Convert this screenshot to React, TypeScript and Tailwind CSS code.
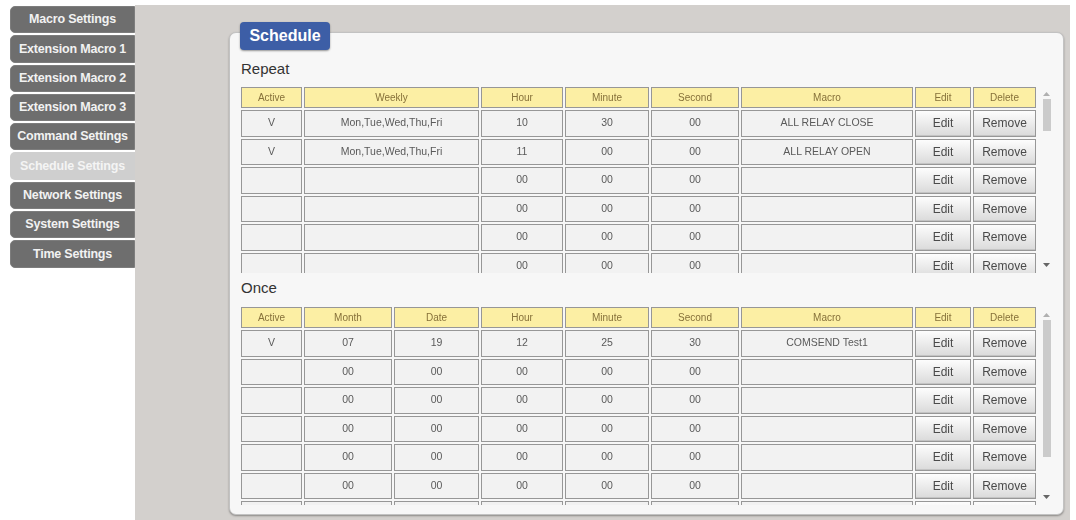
import React from 'react'

const menu = [
  'Macro Settings',
  'Extension Macro 1',
  'Extension Macro 2',
  'Extension Macro 3',
  'Command Settings',
  'Schedule Settings',
  'Network Settings',
  'System Settings',
  'Time Settings',
]

const repeatHead = ['Active', 'Weekly', 'Hour', 'Minute', 'Second', 'Macro']
const repeatRows = [
  ['V', 'Mon,Tue,Wed,Thu,Fri', '10', '30', '00', 'ALL RELAY CLOSE'],
  ['V', 'Mon,Tue,Wed,Thu,Fri', '11', '00', '00', 'ALL RELAY OPEN'],
  ['', '', '00', '00', '00', ''],
  ['', '', '00', '00', '00', ''],
  ['', '', '00', '00', '00', ''],
  ['', '', '00', '00', '00', ''],
]

const onceHead = ['Active', 'Month', 'Date', 'Hour', 'Minute', 'Second', 'Macro']
const onceRows = [
  ['V', '07', '19', '12', '25', '30', 'COMSEND Test1'],
  ['', '00', '00', '00', '00', '00', ''],
  ['', '00', '00', '00', '00', '00', ''],
  ['', '00', '00', '00', '00', '00', ''],
  ['', '00', '00', '00', '00', '00', ''],
  ['', '00', '00', '00', '00', '00', ''],
  // last row only peeks in at the bottom of the scroll box
  ['', '', '', '', '', '', ''],
]

function HeadCell({ label }: { label: string }) {
  return (
    <div className="border border-[#979797] bg-[#fcefa4] flex items-center justify-center text-[10px] text-[#86713a]">
      {label}
    </div>
  )
}

function Cell({ value }: { value: string }) {
  return (
    <div className="border border-[#979797] bg-[#f2f2f2] flex items-center justify-center text-[10.5px] text-[#5a5a5a]">
      {value}
    </div>
  )
}

function RowButton({ label }: { label: string }) {
  return (
    <button className="border border-[#979797] bg-gradient-to-b from-[#fdfdfd] to-[#dadada] flex items-center justify-center text-[12px] text-[#4a4a4a] shadow-[inset_0_-1px_0_#c4c4c4]">
      {label}
    </button>
  )
}

function Scrollbar({ thumb, top }: { thumb: string; top: string }) {
  return (
    <div className="w-[15px] ml-[3px] flex flex-col items-center">
      <svg width="7" height="4" viewBox="0 0 7 4" className={top}>
        <path d="M0 4 L3.5 0 L7 4 Z" fill="#b0b0b0" />
      </svg>
      <div className={`w-[8px] mt-[3px] bg-[#cbcbcb] ${thumb}`} />
      <div className="flex-1" />
      <svg width="7" height="4" viewBox="0 0 7 4" className="mb-[6px]">
        <path d="M0 0 L7 0 L3.5 4 Z" fill="#666" />
      </svg>
    </div>
  )
}

function ScheduleTable({
  cols,
  head,
  rows,
  height,
  thumb,
  top,
}: {
  cols: string
  head: string[]
  rows: string[][]
  height: string
  thumb: string
  top: string
}) {
  return (
    <div className={`flex ${height}`}>
      <div className="w-[795px] overflow-hidden flex flex-col gap-[2px] will-change-transform">
        <div className={`grid ${cols} gap-[2px] h-[21px] shrink-0`}>
          {head.map((h) => (
            <HeadCell key={h} label={h} />
          ))}
          <HeadCell label="Edit" />
          <HeadCell label="Delete" />
        </div>
        {rows.map((r, i) => {
          const blank = r.every((v) => v === '')
          return (
            <div key={i} className={`grid ${cols} gap-[2px] h-[26.5px] shrink-0`}>
              {r.map((v, j) => (
                <Cell key={j} value={v} />
              ))}
              <RowButton label={blank ? '' : 'Edit'} />
              <RowButton label={blank ? '' : 'Remove'} />
            </div>
          )
        })}
      </div>
      <Scrollbar thumb={thumb} top={top} />
    </div>
  )
}

export default function App() {
  return (
    <div className="w-[1076px] h-[520px] bg-white flex overflow-hidden antialiased font-['Liberation_Sans',Arial,sans-serif]">
      {/* Side menu */}
      <nav className="w-[135px] shrink-0 pl-[10px] pt-[6px] flex flex-col gap-[2px]">
        {menu.map((m) => (
          <div
            key={m}
            className={`h-[27.3px] w-[125px] rounded-l-[5px] flex items-center justify-center text-[12.5px] font-bold tracking-[-0.2px] ${
              m === 'Schedule Settings'
                ? 'bg-[#cfcfcf] text-[#f4f4f4]'
                : 'bg-[#6e6e6e] text-[#f2f2f2] border border-[#7d7d7d]'
            }`}
          >
            {m}
          </div>
        ))}
      </nav>

      {/* Content area */}
      <div className="mt-[5px] w-[935px] shrink-0 bg-[#d3d0cd] flex flex-col">
        <div className="ml-[94px] mt-[27px] w-[835px] h-[483px] rounded-[7px] bg-[#f7f7f7] border border-[#c2c2c2] shadow-[0_1px_2px_rgba(0,0,0,0.35)] pl-[11px] flex flex-col">
          <div className="-mt-[11px] ml-[-1px] w-[90px] h-[28px] rounded-[4px] bg-[#3d5ea6] shadow-[0_1px_2px_rgba(0,0,0,0.4)] flex items-center justify-center text-white text-[16px] font-bold">
            Schedule
          </div>

          <div className="mt-[9px] h-[20px] leading-[20px] text-[15px] text-[#333]">Repeat</div>
          <div className="mt-[8px]">
            <ScheduleTable
              cols="grid-cols-[61px_175px_82px_84px_88px_172px_56px_63px]"
              head={repeatHead}
              rows={repeatRows}
              height="h-[186px]"
              thumb="h-[32px]"
              top="mt-[5px]"
            />
          </div>

          <div className="mt-[5px] h-[20px] leading-[20px] text-[15px] text-[#333]">Once</div>
          <div className="mt-[9px]">
            <ScheduleTable
              cols="grid-cols-[61px_88px_85px_82px_84px_88px_172px_56px_63px]"
              head={onceHead}
              rows={onceRows}
              height="h-[198px]"
              thumb="h-[137px]"
              top="mt-[6px]"
            />
          </div>
        </div>
      </div>
    </div>
  )
}
